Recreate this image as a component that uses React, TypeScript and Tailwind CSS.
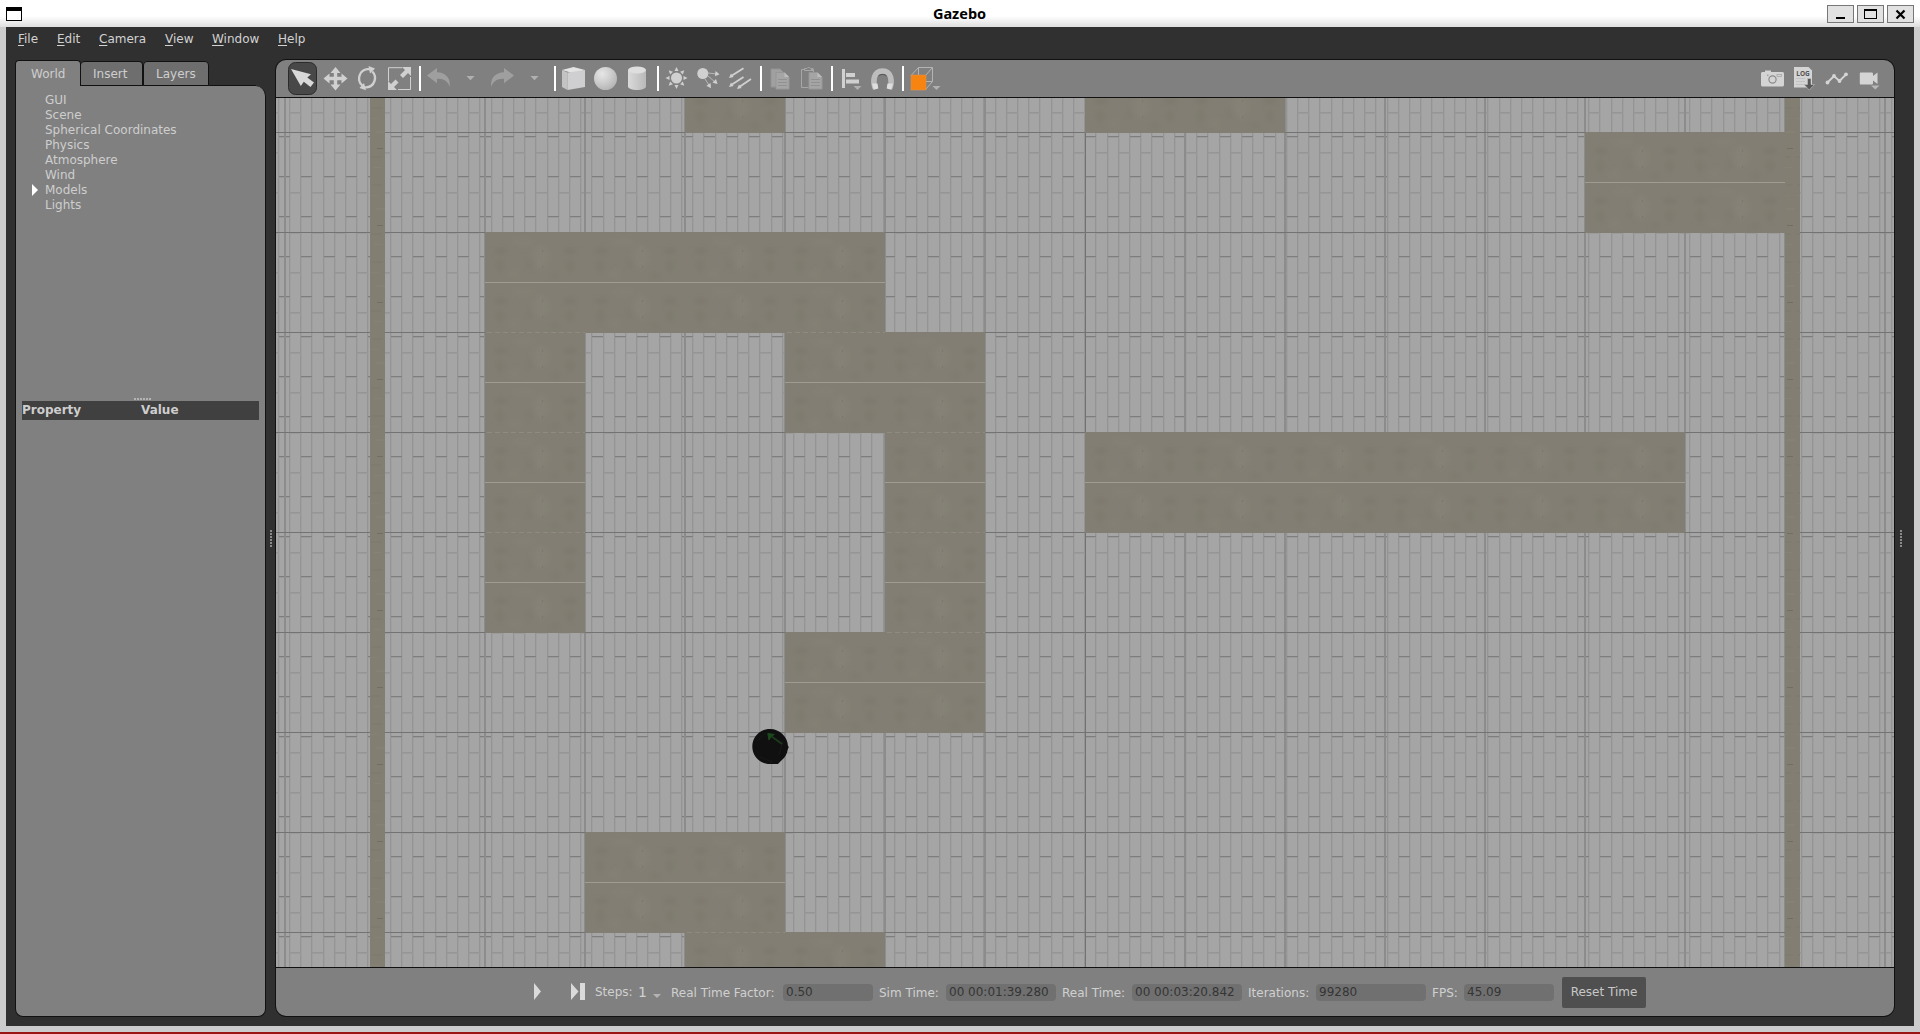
import React from "react";

const FONT = "font-['DejaVu_Sans',sans-serif]";

/* ---------- scene geometry (world view spans x 276..1894, y 98..967) ---------- */

const COL = 11.2;
const COL_START = 278.2;

const columns = Array.from({ length: 146 }, (_, k) => Math.floor(COL_START + (k - 1) * COL));
const seams = columns.map((x) => `M${x} 98h1v869h-1z`).join("");
const seamShade = columns.map((x) => `M${x + 1} 98h1v869h-1z`).join("");

const plankEnds = (parity: number, first: number) => {
  let d = "";
  columns.forEach((x, i) => {
    if (i % 2 !== parity) return;
    for (let y = first; y < 967; y += 40) d += `M${x + 1} ${y}h11v1h-11z`;
  });
  return d;
};
const darkEnds = plankEnds(1, 136);
const lightEnds = plankEnds(0, 112);

const gridX = Array.from({ length: 17 }, (_, i) => 285 + i * 100);
const gridY = Array.from({ length: 9 }, (_, i) => 132 + i * 100);

type Box = [number, number, number, number];
const walls: Box[] = [
  [685, 98, 100, 34],
  [1085, 98, 200, 34],
  [1585, 132, 200, 100],
  [485, 232, 400, 100],
  [485, 332, 100, 300],
  [785, 332, 200, 100],
  [885, 432, 100, 200],
  [785, 632, 200, 100],
  [1085, 432, 600, 100],
  [585, 832, 200, 100],
  [685, 932, 200, 35],
];
const ridges: [number, number, number][] = [
  [1585, 182, 200],
  [485, 282, 400],
  [485, 382, 100],
  [485, 482, 100],
  [485, 582, 100],
  [785, 382, 200],
  [885, 482, 100],
  [885, 582, 100],
  [785, 682, 200],
  [1085, 482, 600],
  [585, 882, 200],
];
const joints: [number, number, number][] = [
  [485, 332, 100],
  [785, 332, 100],
  [485, 432, 100],
  [485, 532, 100],
  [885, 432, 100],
  [885, 532, 100],
  [885, 632, 100],
  [685, 932, 100],
];

function Scene() {
  return (
    <svg className="block" width="1618" height="869" viewBox="276 98 1618 869" shapeRendering="crispEdges">
      <defs>
        <filter id="soft" x="-30%" y="-30%" width="160%" height="160%">
          <feGaussianBlur stdDeviation="2.6" />
        </filter>
        <pattern id="concrete" x="485" y="232" width="100" height="50" patternUnits="userSpaceOnUse">
          <rect width="100" height="50" fill="#827e73" />
          <g filter="url(#soft)">
            <ellipse cx="16" cy="19" rx="7" ry="2.5" fill="#7b776c" />
            <ellipse cx="15" cy="34" rx="4" ry="7" fill="#7e7a6e" />
            <ellipse cx="85" cy="19" rx="7" ry="2.5" fill="#7b776c" />
            <ellipse cx="85" cy="34" rx="4" ry="7" fill="#7e7a6e" />
            <ellipse cx="56" cy="25" rx="8" ry="12" fill="#858176" />
            <ellipse cx="38" cy="10" rx="12" ry="4" fill="#848075" />
            <ellipse cx="30" cy="42" rx="7" ry="4" fill="#848075" />
            <ellipse cx="70" cy="44" rx="5" ry="4" fill="#7f7b70" />
            <ellipse cx="44" cy="32" rx="4" ry="6" fill="#807c71" />
          </g>
          <rect x="57" y="18" width="1" height="2" fill="#7a766b" />
          <rect x="57" y="34" width="1" height="2" fill="#7a766b" />
        </pattern>
        <pattern id="strip" x="370" y="98" width="15" height="77" patternUnits="userSpaceOnUse">
          <rect width="15" height="77" fill="#827e72" />
          <rect x="2" y="9" width="11" height="2" fill="#7f7b6f" />
          <rect x="0" y="20" width="9" height="1" fill="#858175" />
          <rect x="6" y="33" width="9" height="2" fill="#858175" />
          <rect x="7" y="50" width="6" height="1" fill="#726e63" />
          <rect x="1" y="58" width="10" height="2" fill="#7f7b6f" />
          <rect x="4" y="69" width="8" height="1" fill="#868276" />
        </pattern>
      </defs>

      <rect x="276" y="98" width="1618" height="869" fill="#a5a5a5" />
      <path d={seams} fill="#949494" />
      <path d={seamShade} fill="#9f9f9f" />
      <path d={lightEnds} fill="#969696" />
      <path d={lightEnds} fill="#9b9b9b" transform="translate(0 1)" />
      <path d={darkEnds} fill="#7e7e7e" />
      <path d={darkEnds} fill="#999999" transform="translate(0 1)" />

      {gridX.map((x) =>
        x === 385 ? null : (
          <rect key={x} x={x === 1085 ? x : x - 1} y="98" width={x === 1085 ? 1 : 2} height="869" fill={x === 1085 ? "#727272" : "#8c8c8c"} />
        ),
      )}
      {gridY.map((y) => (
        <rect key={y} x="276" y={y} width="1618" height="1" fill="#737373" />
      ))}

      {[370, 1785].map((x) => (
        <rect key={x} x={x} y="98" width="15" height="869" fill="url(#strip)" />
      ))}
      {walls.map(([x, y, w, h]) => (
        <rect key={`${x}-${y}`} x={x} y={y} width={w} height={h + (y + h < 960 ? 0.6 : 0)} fill="url(#concrete)" />
      ))}
      {ridges.map(([x, y, w]) => (
        <rect key={`${x}-${y}`} x={x} y={y} width={w} height="1" fill="#a09d90" />
      ))}
      {joints.map(([x, y, w]) => (
        <path key={`${x}-${y}`} d={`M${x + 2} ${y + 0.5}H${x + w}`} stroke="#8f8b7e" strokeDasharray="5 3" />
      ))}

      <g shapeRendering="auto">
        <path d="M770 729c10 0 17.600 8 18 17l.8 1-.9 2c-.8 5-3 8.500-6 11l-4 4h-8c-10 0-17.600-8-17.600-17.500S760 729 770 729z" fill="#101010" />
        <path d="M757 741l9-8M760 757l12 5M783 741l-4 14" stroke="#181818" fill="none" />
        <path d="M782 744l-11-8" stroke="#1c3a1c" strokeWidth="2" fill="none" />
        <path d="M769 740l-1.200-6.500 6.500 1-3 1.500z" fill="#1d4a1d" stroke="#1d4a1d" />
      </g>
    </svg>
  );
}

/* ---------- toolbar ---------- */

function Cell({ x, w, children }: { x: number; w: number; children?: React.ReactNode }) {
  return (
    <svg className="block shrink-0" width={w} height="37" viewBox={`${x} 60 ${w} 37`}>
      {children}
    </svg>
  );
}

function Sep({ x, w, at }: { x: number; w: number; at: number }) {
  return (
    <Cell x={x} w={w}>
      <rect x={at} y="66" width="2" height="25" fill="#fff" />
    </Cell>
  );
}

const rays = [0, 45, 90, 135, 180, 225, 270, 315];
const LIGHT = "#d0d0d0";
const DIM = "#9f9f9f";

function Toolbar() {
  return (
    <div className="flex h-[37px] w-full shrink-0 bg-[#808080]">
      <Cell x={276} w={46}>
        <rect x="288.500" y="62.500" width="28" height="32" rx="7" fill="#484848" stroke="#2b2b2b" />
        <path d="M291 69l20 5.200-3.700 3.200 6.700 5-3.500 4.500-6.700-5.200-3 4.300z" fill="#d8d8d8" />
      </Cell>
      <Cell x={322} w={30}>
        <path d="M335.500 67l5 6h-3.300v3.800h4.300v-3.300l6 5-6 5v-3.300h-4.300v4.300h3.300l-5 6-5-6h3.300v-4.300h-4.300v3.300l-6-5 6-5v3.300h4.300V73h-3.300z" fill={LIGHT} />
      </Cell>
      <Cell x={352} w={32}>
        <path d="M362.300 85.500A9.300 9.300 0 0 1 367.500 69.200H370M372.300 71.500A9.300 9.300 0 0 1 366.500 87.300H364" fill="none" stroke={LIGHT} strokeWidth="2.300" />
        <path d="M368.500 66l6.500 2.600-5 4.900zM366 90.300l-6.500-2.300 4.500-5z" fill={LIGHT} />
      </Cell>
      <Cell x={384} w={32}>
        <path d="M402 67.700H388.500V81M388.500 88v1.500h2M398 89.500h12.500V77" fill="none" stroke={LIGHT} />
        <path d="M402 67h9v9l-3-3-5 5-3-3 5-5zM397 90h-9v-9l3 3 4.500-4.500 3 3L394 87z" fill={LIGHT} />
      </Cell>
      <Sep x={416} w={8} at={419} />
      <Cell x={424} w={35}>
        <path d="M427 75.500l10-7.500v4.200c8 .3 14 5.300 12.700 14.800-1.300-5-5.500-8.500-12.700-8.200v4.500z" fill={DIM} />
      </Cell>
      <Cell x={459} w={28}>
        <path d="M466.500 76h8l-4 4.200z" fill="#b0b0b0" />
      </Cell>
      <Cell x={487} w={35}>
        <path d="M514 75.500l-10-7.500v4.200c-8 .3-14 5.300-12.700 14.800 1.300-5 5.500-8.500 12.700-8.200v4.500z" fill={DIM} />
      </Cell>
      <Cell x={522} w={28}>
        <path d="M530.500 76h8l-4 4.200z" fill="#b0b0b0" />
      </Cell>
      <Sep x={550} w={8} at={554} />
      <Cell x={558} w={32}>
        <path d="M562 70l11.500-3 11.500 3-11 3.500z" fill="#e4e4e4" />
        <path d="M562 70l5.500 2.500V90l-5.500-3z" fill="#c3c3c3" />
        <path d="M567.500 72.500L585 70v17l-17.500 3z" fill="#cfcfd1" />
      </Cell>
      <Cell x={590} w={32}>
        <defs>
          <radialGradient id="ball" cx=".35" cy=".3" r=".75">
            <stop offset="0" stopColor="#e6e6e6" />
            <stop offset=".5" stopColor="#cfcfcf" />
            <stop offset="1" stopColor="#b4b4b4" />
          </radialGradient>
        </defs>
        <circle cx="605.500" cy="78.500" r="11.500" fill="url(#ball)" />
      </Cell>
      <Cell x={622} w={31}>
        <defs>
          <linearGradient id="can">
            <stop offset="0" stopColor="#dadada" />
            <stop offset="1" stopColor="#b9b9b9" />
          </linearGradient>
        </defs>
        <path d="M628 70v16.500c0 4.600 18 4.600 18 0V70z" fill="url(#can)" />
        <ellipse cx="637" cy="70" rx="9" ry="3.500" fill="#dedede" />
      </Cell>
      <Sep x={653} w={9} at={657} />
      <Cell x={662} w={31}>
        <circle cx="676.500" cy="78" r="5.500" fill={LIGHT} />
        {rays.map((a) => (
          <path key={a} d="M683.500 76l4 2-4 2z" fill={LIGHT} transform={`rotate(${a} 676.500 78)`} />
        ))}
      </Cell>
      <Cell x={693} w={32}>
        <circle cx="702.800" cy="73.500" r="5.500" fill={LIGHT} />
        <path d="M708 73l9 1M708 76l7 6M705 79l4 6" stroke={LIGHT} strokeWidth=".7" />
        <path d="M715.500 71l4 3.200-4.500 2zM716 79l1.500 5-5-1.200zM710.500 83l.5 5.300-4.600-2.600z" fill={LIGHT} />
      </Cell>
      <Cell x={725} w={31}>
        <path d="M743.500 68.200L732 75.500M743.500 77L732 84.500M751 79L740 86.500" stroke={LIGHT} strokeWidth="1.800" />
        <path d="M729 78l2-4.500 2.600 3.500zM729 87l2-4.500 2.600 3.500zM737 89l2-4.500 2.600 3.500z" fill={LIGHT} />
      </Cell>
      <Sep x={756} w={11} at={760} />
      <Cell x={767} w={30}>
        <path d="M771 69h9l3 3v15h-12z" fill="#a0a0a0" stroke="#939393" />
        <path d="M776 72.500h8.500l4.500 4.500v12h-13z" fill="#a5a5a5" stroke="#979797" />
        <path d="M784.500 72.500v4.500h4.500z" fill="#bdbdbd" />
        <path d="M778 79.500h9M778 82.500h9M778 85.500h9" stroke="#919191" />
      </Cell>
      <Cell x={797} w={30}>
        <path d="M804 69.500h-2.500v18h7M811 69.500h2.500V72M804.500 70.500v-2h2.500c.5-1.500 3-1.500 3.500 0h2.500v2z" fill="none" stroke="#a6a6a6" />
        <path d="M809 72.500h8.500l4.500 4.500v12h-13z" fill="#a5a5a5" stroke="#979797" />
        <path d="M817.500 72.500v4.500h4.500z" fill="#bdbdbd" />
        <path d="M811 79.500h9M811 82.500h9M811 85.500h9" stroke="#919191" />
      </Cell>
      <Sep x={827} w={10} at={831} />
      <Cell x={837} w={29}>
        <path d="M842 69h3v19h-3zM846 73h9v4h-9zM846 79.500h13v4h-13z" fill={LIGHT} />
        <path d="M853.500 86h8l-4 4z" fill="#b0b0b0" />
      </Cell>
      <Cell x={866} w={32}>
        <path d="M875.500 88.500c-3-6-2.500-17.500 7-17.500s10 11.500 7 17.500" fill="none" stroke="#bdbdbd" strokeWidth="5.500" />
        <path d="M872 83.500h5.500l.8 5-4.500 1.300zM893 83.500h-5.500l-.8 5 4.500 1.300z" fill="#dedede" />
        <path d="M878.500 76c2-2 6-2 8 0" stroke="#4c4c4c" fill="none" />
      </Cell>
      <Sep x={898} w={10} at={902} />
      <Cell x={908} w={36}>
        <path d="M911 75.500l7.500-8h14v14l-7 8M925.500 75.500l7-8M918.500 67.500v8M925 81.500h7.500" fill="none" stroke="#b4b4b4" />
        <rect x="911" y="75" width="15" height="15" fill="#f78310" stroke="#d9934f" strokeWidth=".6" />
        <path d="M932.500 86h8l-4 4z" fill="#b0b0b0" />
      </Cell>
      <div className="flex-1" />
      <Cell x={1757} w={32}>
        <path d="M1763 72h2v-1.500h6V72h11c1.500 0 2 .5 2 2v10.500c0 1.500-.5 2-2 2h-19c-1.500 0-2-.5-2-2V74c0-1.500.5-2 2-2z" fill="#d4d4d4" />
        <circle cx="1772.500" cy="79.500" r="3.600" fill="none" stroke="#8b8b8b" strokeWidth="1.200" />
        <rect x="1777" y="74.500" width="4.500" height="2" fill="none" stroke="#a0a0a0" strokeWidth=".7" />
        <rect x="1767" y="74.500" width="1.500" height="1.500" fill="#a0a0a0" />
      </Cell>
      <Cell x={1789} w={31}>
        <path d="M1794 67h14.500l3.500 3.500V87.500h-18z" fill="#d4d4d4" />
        <path d="M1796 78.500h9M1796 81.500h9M1796 84.500h9" stroke="#c2c2c2" />
        <text x="1796.300" y="76" fontSize="7.500" fontWeight="700" fill="#555" textLength="13.500" lengthAdjust="spacingAndGlyphs" className="font-['Open_Sans',sans-serif]">LOG</text>
        <path d="M1807.500 78.500h3.500v6h3.500l-5.200 5.500-5.300-5.500h3.500z" fill="#595959" stroke="#cfcfcf" strokeWidth=".5" />
      </Cell>
      <Cell x={1820} w={33}>
        <path d="M1827.500 82.500l6.500-6.500 5.500 5 7-7" fill="none" stroke="#d4d4d4" strokeWidth="1.900" />
        <g fill="#d4d4d4">
          <circle cx="1827.500" cy="82.500" r="1.900" />
          <circle cx="1834" cy="76" r="1.900" />
          <circle cx="1839.500" cy="81" r="1.900" />
          <circle cx="1846" cy="74.300" r="1.900" />
        </g>
      </Cell>
      <Cell x={1853} w={41}>
        <path d="M1861 72.500h10.500c1 0 1.500.5 1.500 1.500v2l4.500-3.500V84l-4.500-3.500V83c0 1-.5 1.500-1.500 1.500H1861c-1 0-1.200-.5-1.200-1.500V74c0-1 .2-1.500 1.200-1.500z" fill="#d4d4d4" />
        <path d="M1871 85.500h8.500l-4.200 4z" fill="#b8b8b8" />
      </Cell>
    </div>
  );
}

/* ---------- window chrome ---------- */

function TitleButton({ children }: { children: React.ReactNode }) {
  return (
    <svg className="block" width="27" height="18" viewBox="0 0 27 18">
      <rect x=".5" y=".5" width="26" height="17" fill="#e2e2e2" stroke="#777" />
      {children}
    </svg>
  );
}

function TitleBar() {
  return (
    <div className="flex h-[27px] shrink-0 items-start bg-linear-to-b from-white from-60% to-[#dedede]">
      <div className="ml-[6px] mt-[7px] h-[14px] w-[16px] border border-t-4 border-black bg-white" />
      <div className="flex-1 pl-[70px] pt-[4px] text-center font-['Noto_Sans',sans-serif] text-[14.5px] font-bold leading-[18px] text-black">Gazebo</div>
      <div className="mr-[6px] mt-[5px] flex gap-[3px]">
        <TitleButton>
          <rect x="9" y="12" width="9" height="2" fill="#000" />
        </TitleButton>
        <TitleButton>
          <path d="M7 4h13v10H7zM8 6v7h11V6z" fill="#000" fillRule="evenodd" />
        </TitleButton>
        <TitleButton>
          <path d="M9.500 5.500l8 8M17.500 5.500l-8 8" stroke="#000" strokeWidth="2.200" />
        </TitleButton>
      </div>
    </div>
  );
}

const menus: [string, string][] = [
  ["File", "w-[39px]"],
  ["Edit", "w-[42px]"],
  ["Camera", "w-[66px]"],
  ["View", "w-[47px]"],
  ["Window", "w-[66px]"],
  ["Help", "w-[40px]"],
];

function MenuBar() {
  return (
    <div className="flex h-[32px] shrink-0 pl-[12px] pt-[4px] text-[12px] leading-[16px] text-[#d2d2d2]">
      {menus.map(([m, w]) => (
        <span key={m} className={w}>
          <span className="underline decoration-1 underline-offset-[2px]">{m[0]}</span>
          {m.slice(1)}
        </span>
      ))}
    </div>
  );
}

const tree = ["GUI", "Scene", "Spherical Coordinates", "Physics", "Atmosphere", "Wind", "Models", "Lights"];

function LeftPanel() {
  return (
    <div className="flex w-[251px] shrink-0 flex-col text-[12px] text-[#cecece]">
      <div className="flex h-[26px] shrink-0 items-end">
        <div className="h-[26px] w-[66px] rounded-t-[4px] border border-b-0 border-[#111] bg-[#808080] pl-[15px] pt-[5px] leading-[16px]">World</div>
        <div className="h-[25px] w-[62px] rounded-t-[4px] border border-l-0 border-[#111] bg-[#6e6e6e] pl-[12px] pt-[4px] leading-[16px]">Insert</div>
        <div className="h-[25px] w-[66px] rounded-t-[4px] border border-[#111] bg-[#6e6e6e] pl-[12px] pt-[4px] leading-[16px]">Layers</div>
        <div className="h-px w-[47px] bg-[#111]" />
      </div>
      <div className="flex min-h-0 flex-1 flex-col rounded-b-[8px] rounded-tr-[10px] border border-t-0 border-[#111] bg-[#808080] pt-[7px]">
        <div className="flex h-[306px] shrink-0 flex-col">
          {tree.map((t) => (
            <div key={t} className="flex h-[15px] items-center leading-[15px]">
              <div className="w-[29px] pl-[16px]">
                {t === "Models" && <div className="-mt-[2px] h-0 w-0 border-y-[6px] border-l-[6px] border-y-transparent border-l-white" />}
              </div>
              <div>{t}</div>
            </div>
          ))}
        </div>
        <div className="ml-[118px] mt-[-1px] flex h-[3px] shrink-0 gap-[1px]">
          {tree.slice(0, 6).map((t) => (
            <i key={t} className="h-[2px] w-[2px] bg-[#b4b4b4]" />
          ))}
        </div>
        <div className="ml-[6px] flex h-[19px] w-[237px] shrink-0 bg-[#404040] font-bold leading-[19px]">
          <div className="w-[119px]">Property</div>
          <div>Value</div>
        </div>
      </div>
    </div>
  );
}

function Grip() {
  return (
    <div className="flex flex-col gap-[1px]">
      {[0, 1, 2, 3, 4, 5].map((n) => (
        <i key={n} className="h-[2px] w-[2px] bg-[#8a8a8a]" />
      ))}
    </div>
  );
}

function Field({ label, value, labelW, fieldW }: { label: string; value: string; labelW: string; fieldW: string }) {
  return (
    <>
      <div className={`${labelW} shrink-0 whitespace-nowrap pt-[1px]`}>{label}</div>
      <div className={`${fieldW} h-[17px] shrink-0 whitespace-nowrap rounded-[4px] bg-[#707070] pl-[3px] leading-[17px] text-[#353535]`}>{value}</div>
    </>
  );
}

function StatusBar() {
  return (
    <div className="flex h-[48px] shrink-0 items-center bg-[#808080] text-[12px] leading-[16px] text-[#d0d0d0]">
      <svg className="block shrink-0" width="319" height="48" viewBox="276 968 319 48">
        <path d="M534 983l7 8.500-7 8.500zM571 983l7.500 8.500-7.500 8.500zM580 983h5v17h-5z" fill="#dadada" />
      </svg>
      <div className="w-[43px] shrink-0">Steps:</div>
      <div className="w-[15px] shrink-0 text-[14px]">1</div>
      <div className="mr-[10px] mt-[8px] h-0 w-0 border-x-4 border-t-4 border-x-transparent border-t-[#b4b4b4]" />
      <Field label="Real Time Factor:" value="0.50" labelW="w-[112px]" fieldW="w-[90px]" />
      <Field label="Sim Time:" value="00 00:01:39.280" labelW="w-[73px] pl-[6px]" fieldW="w-[110px]" />
      <Field label="Real Time:" value="00 00:03:20.842" labelW="w-[76px] pl-[6px]" fieldW="w-[110px]" />
      <Field label="Iterations:" value="99280" labelW="w-[74px] pl-[6px]" fieldW="w-[110px]" />
      <Field label="FPS:" value="45.09" labelW="w-[38px] pl-[6px]" fieldW="w-[90px]" />
      <button className="ml-[8px] h-[31px] w-[84px] shrink-0 rounded-[2px] bg-[#4f4f4f] text-[#c8c8c8]">Reset Time</button>
    </div>
  );
}

export default function App() {
  return (
    <div className={`flex h-[1034px] w-[1920px] flex-col overflow-hidden bg-[#cccccc] ${FONT}`}>
      <TitleBar />
      <div className="mx-[6px] flex h-[999px] shrink-0 flex-col bg-[#303030]">
        <MenuBar />
        <div className="flex h-[958px] shrink-0 pl-[9px]">
          <div className="flex pt-px">
            <LeftPanel />
          </div>
          <div className="flex w-[9px] shrink-0 items-center justify-center">
            <Grip />
          </div>
          <div className="flex w-[1620px] shrink-0 flex-col overflow-hidden rounded-[11px] border border-[#111] bg-[#111]">
            <Toolbar />
            <div className="border-y border-[#111]">
              <Scene />
            </div>
            <StatusBar />
          </div>
          <div className="flex flex-1 items-center justify-center pr-[7px]">
            <Grip />
          </div>
        </div>
      </div>
      <div className="h-[6px] shrink-0 bg-[#cbcacc]" />
      <div className="h-[2px] shrink-0 bg-[#9a1414]" />
    </div>
  );
}
